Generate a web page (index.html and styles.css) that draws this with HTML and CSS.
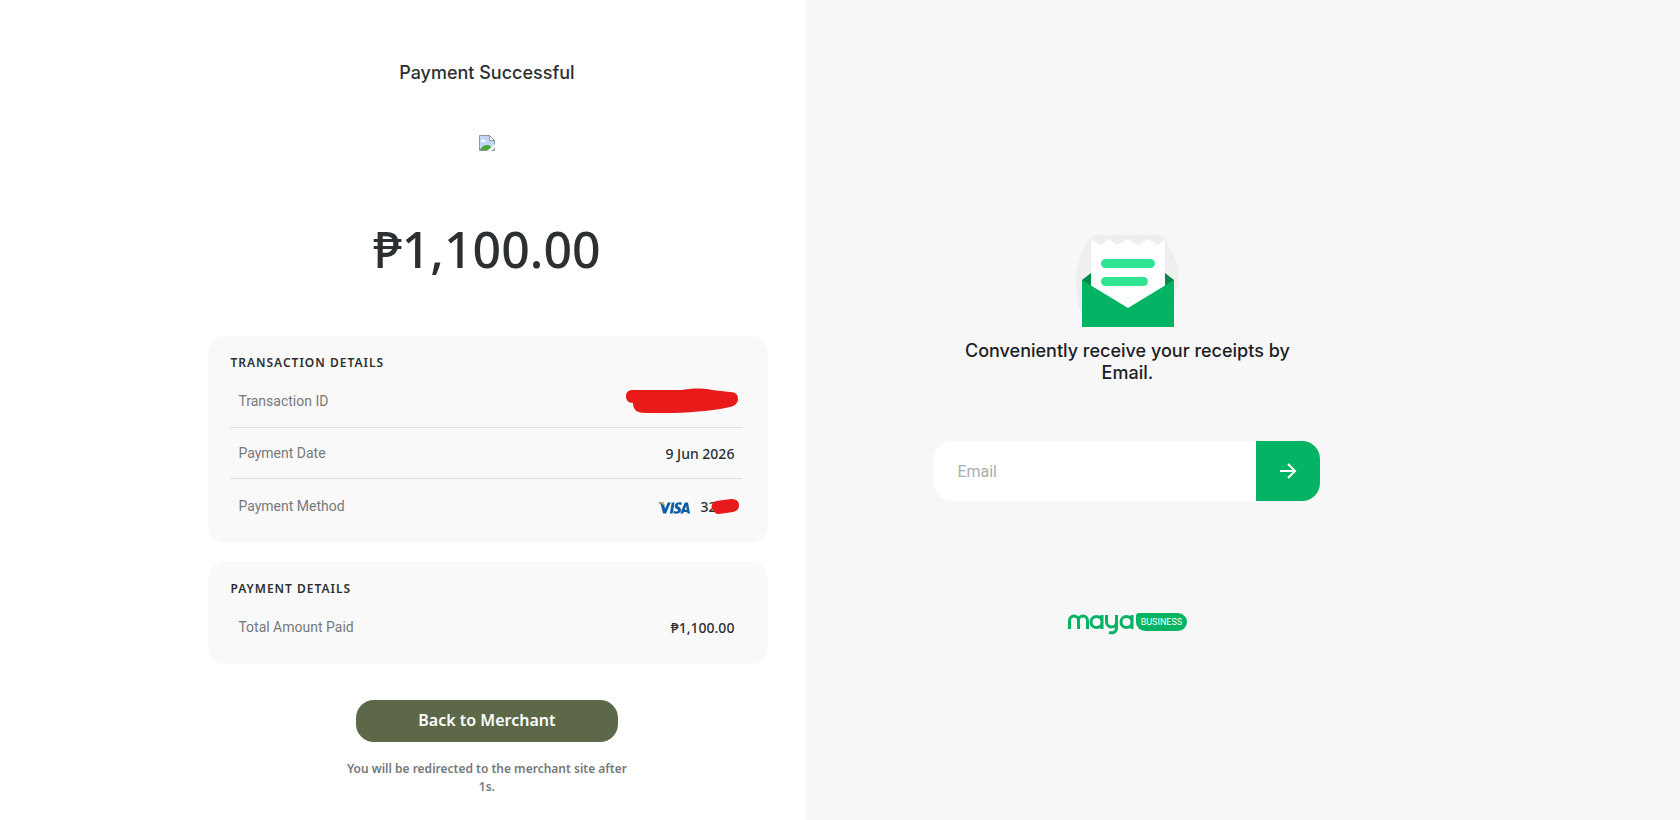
FILE: index.html
```html
<!DOCTYPE html>
<html lang="en">
<head>
    <meta charset="UTF-8">
    <meta name="viewport" content="width=device-width, initial-scale=1">
    <title>Payment Successful</title>
    <link rel="stylesheet" href="styles.css">
</head>
<body>
<div class="page">
    <main class="result">
        <div class="result-inner">
            <h1 class="title">Payment Successful</h1>
            <svg class="shop-logo" width="16" height="16" viewBox="0 0 16 16" role="img" aria-label="Merchant logo">
                <path d="M0.500 0.500h10l5 5v10h-15z" fill="#c3d6f5"/>
                <path d="M2 6c0-2 3-2 3-.5 2-.5 2 1.500 1 1.500H2.500z" fill="#fff"/>
                <path d="M1 15c1-3 4-5 7-5s4 1 5 5z" fill="#4ba53c"/>
                <path d="M0.500 15.500V.5h10l5 5v10z" fill="none" stroke="#8f969c"/>
                <path d="M10.500 .5v5h5z" fill="#fff" stroke="#8f969c"/>
                <path d="M8 16l8-7v3l-4 4z" fill="#fff"/>
            </svg>
            <div class="amount">₱1,100.00</div>

            <section class="card">
                <h2 class="card-title">Transaction Details</h2>
                <dl class="rows">
                    <div class="row">
                        <dt>Transaction ID</dt>
                        <dd>
                            <svg class="mark-id" width="112" height="26" viewBox="0 0 112 26" role="img" aria-label="Hidden">
                                <path d="M6 2H56C66 0 78 0 86 2L104 4C110 4 112 7 112 11C112 15 109 18 104 19C86 23 60 25 38 25H20C11 25 7 22 7 15C2 15 0 12 0 8C0 4 3 2 6 2Z" fill="#e81a1a"/>
                            </svg>
                        </dd>
                    </div>
                    <div class="row">
                        <dt>Payment Date</dt>
                        <dd>9 Jun 2026</dd>
                    </div>
                    <div class="row">
                        <dt>Payment Method</dt>
                        <dd>
                            <svg class="visa" width="32" height="16" viewBox="0 -4 32 16" role="img" aria-label="Visa">
                                <path d="M0 .5H4.500C5.500 .5 5.900 .9 6.100 1.800L7 6.800 9.800 .5H12.700L8 11.500H5.100L2.900 3C2.700 2 1.500 1.200 0 .8Z" fill="#0b5ea6"/>
                                <path d="M0 .5H4.500C5.500 .5 5.900 .9 6.100 1.800L6.600 4.500C5.500 2.500 3 1.200 0 .8Z" fill="#e9a63a"/>
                                <path d="M13.700 .5H16.500L14.700 11.500H11.900Z" fill="#0b5ea6"/>
                                <path d="M23.800 .7L23.400 3C21.500 2.200 19.600 2.300 19.600 3.400C19.600 4.600 23 4.900 23 7.800C23 11.600 18.500 12.300 15.400 11.200L15.800 8.800C17.600 9.700 20 9.700 20 8.400C20 7 16.700 6.800 16.700 4C16.700 .7 20.700-.5 23.800 .7Z" fill="#0b5ea6"/>
                                <path d="M27.500 .5H30L32 11.500H29.500L29.200 9.900H25.800L25.200 11.500H22.300L26.300 1.400C26.500 .8 26.900 .5 27.500 .5ZM28.200 4L26.600 7.800H28.900Z" fill="#0b5ea6" fill-rule="evenodd"/>
                            </svg>
                            <span class="card-number">32
                                <svg class="mark-card" width="28" height="15" viewBox="0 0 28 15" role="img" aria-label="Hidden">
                                    <path d="M5 2L20 0C25 0 28 2 28 6C28 10 26 12 22 13L8 15C4 15 4 13 3 12C0 10-1 4 5 2Z" fill="#e81a1a"/>
                                </svg>
                            </span>
                        </dd>
                    </div>
                </dl>
            </section>

            <section class="card">
                <h2 class="card-title">Payment Details</h2>
                <dl class="rows">
                    <div class="row">
                        <dt>Total Amount Paid</dt>
                        <dd>₱1,100.00</dd>
                    </div>
                </dl>
            </section>

            <button class="back" type="button">Back to Merchant</button>
            <p class="redirect">You will be redirected to the merchant site after 1s.</p>
        </div>
    </main>

    <aside class="receipt">
        <div class="receipt-inner">
            <svg class="envelope" width="104" height="96" viewBox="0 0 104 96" aria-hidden="true">
                <path d="M20 1H84C90 1 92 5 93 12L101 26C105 40 103 58 96 70L90 92H12L6 78C0 66 0 40 3 30C7 14 12 4 20 1Z" fill="#eeeeee"/>
                <path d="M7 46L16 39V60H7ZM99 46L90 39V60H99Z" fill="#008a4b"/>
                <path d="M16 5L26 11L34 5L42 11L53 5L63 11L73 5L83 11L90 6V60L53 76L16 60Z" fill="#fff"/>
                <rect x="26" y="25" width="54" height="9" rx="4.500" fill="#2fe592"/>
                <rect x="26" y="43" width="47" height="9" rx="4.500" fill="#2fe592"/>
                <path d="M7 46L53 74L99 46V93H7Z" fill="#04b464"/>
            </svg>
            <h2 class="receipt-title">Conveniently receive your receipts by Email.</h2>
            <form class="email-form">
                <input class="email" type="email" placeholder="Email" aria-label="Email">
                <button class="send" type="button" aria-label="Send receipt">
                    <svg width="18" height="18" viewBox="0 0 18 18" fill="none" stroke="#fff" stroke-width="2">
                        <path d="M1 9H16M9 2L16 9L9 16"/>
                    </svg>
                </button>
            </form>
            <div class="brand">
                <svg width="66" height="22" viewBox="0 0 66 22" role="img" aria-label="maya" fill="none" stroke="#04b464" stroke-width="3">
                    <path d="M1.500 16V7.500A4.500 4.500 0 0 1 10.500 7.500V16M10.500 7.500A4.500 4.500 0 0 1 19.500 7.500V16"/>
                    <path d="M34 2V16M34 9A5.500 5.500 0 1 0 23 9A5.500 5.500 0 1 0 34 9"/>
                    <path d="M38.500 2V9A5 5 0 0 0 48.500 9V2M48.500 9V15C48.500 19 45 20.500 41 19.500"/>
                    <path d="M64 2V16M64 9A5.500 5.500 0 1 0 53 9A5.500 5.500 0 1 0 64 9"/>
                </svg>
                <span class="brand-tag">BUSINESS</span>
            </div>
        </div>
    </aside>
</div>
</body>
</html>
```
FILE: styles.css
```css
* {
    box-sizing: border-box;
}

body {
    margin: 0;
    font-family: "Noto Sans", "Open Sans", sans-serif;
    color: #2c3032;
    background-color: #ffffff;
}

h1, h2, p, dl, dd {
    margin: 0;
}

button, input {
    border: 0;
    font-family: inherit;
}

.page {
    display: flex;
    min-height: 100vh;
}

.result {
    flex: 0 0 48%;
    display: flex;
    justify-content: flex-end;
    padding: 60px 38px 24px 24px;
}

.result-inner {
    display: flex;
    flex-direction: column;
    align-items: center;
    width: 100%;
    max-width: 563px;
}

.title {
    font-family: Inter, sans-serif;
    font-size: 18px;
    line-height: 26px;
    font-weight: 500;
}

.shop-logo {
    margin-top: 49px;
}

.amount {
    margin: 64px 0 53px;
    font-size: 50px;
    line-height: 68px;
    font-weight: 500;
}

.card {
    align-self: flex-end;
    width: 100%;
    max-width: 560px;
    margin-bottom: 19px;
    padding: 16px 26px 10px 22px;
    border-radius: 18px;
    background-color: #f9f9f9;
}

.card-title {
    font-size: 12px;
    line-height: 22px;
    font-weight: 600;
    letter-spacing: 1px;
    text-transform: uppercase;
}

.row {
    display: flex;
    justify-content: space-between;
    align-items: center;
    height: 51px;
    padding: 0 8px;
    border-bottom: 1px solid #dfdfdf;
    font-size: 14px;
}

.row:first-child,
.row:last-child {
    height: 54px;
}

.row:last-child {
    border-bottom: 0;
}

.row dt {
    color: #75797b;
    font-family: Roboto, sans-serif;
}

.row dd {
    display: flex;
    align-items: center;
    font-weight: 500;
}

.mark-id {
    margin-right: -4px;
}

.visa {
    margin-right: 10px;
}

.card-number {
    position: relative;
    width: 34px;
}

.mark-card {
    position: absolute;
    top: 2px;
    right: -5px;
}

.back {
    width: 262px;
    height: 42px;
    margin-top: 17px;
    padding-bottom: 3px;
    border-radius: 18px;
    background-color: #5c6847;
    color: #ffffff;
    font-size: 16px;
    font-weight: 600;
    cursor: pointer;
}

.redirect {
    width: 290px;
    margin-top: 18px;
    color: #75797b;
    font-size: 12px;
    line-height: 18px;
    font-weight: 600;
    text-align: center;
}

.receipt {
    flex: 1;
    padding: 234px 24px 24px 128px;
    background-color: #f7f7f7;
}

.receipt-inner {
    display: flex;
    flex-direction: column;
    align-items: center;
    width: 100%;
    max-width: 386px;
}

.receipt-title {
    width: 350px;
    margin-top: 10px;
    color: #1c2124;
    font-family: Inter, sans-serif;
    font-size: 18px;
    line-height: 22px;
    font-weight: 500;
    text-align: center;
}

.email-form {
    display: flex;
    width: 100%;
    margin-top: 57px;
}

.email {
    flex: 1;
    min-width: 0;
    height: 60px;
    padding: 0 23px;
    border-radius: 18px 0 0 18px;
    background-color: #ffffff;
    font-family: Roboto, sans-serif;
    font-size: 16px;
}

.email::placeholder {
    color: #adadad;
}

.send {
    display: flex;
    align-items: center;
    justify-content: center;
    width: 64px;
    height: 60px;
    border-radius: 0 18px 18px 0;
    background-color: #04b464;
    cursor: pointer;
}

.brand {
    display: flex;
    margin-top: 112px;
}

.brand-tag {
    height: 18px;
    margin-left: 2px;
    padding: 0 5px;
    border-radius: 3px 9px 9px 9px;
    background-color: #04b464;
    color: #ffffff;
    font-family: Roboto, sans-serif;
    font-size: 9px;
    line-height: 18px;
}
```
